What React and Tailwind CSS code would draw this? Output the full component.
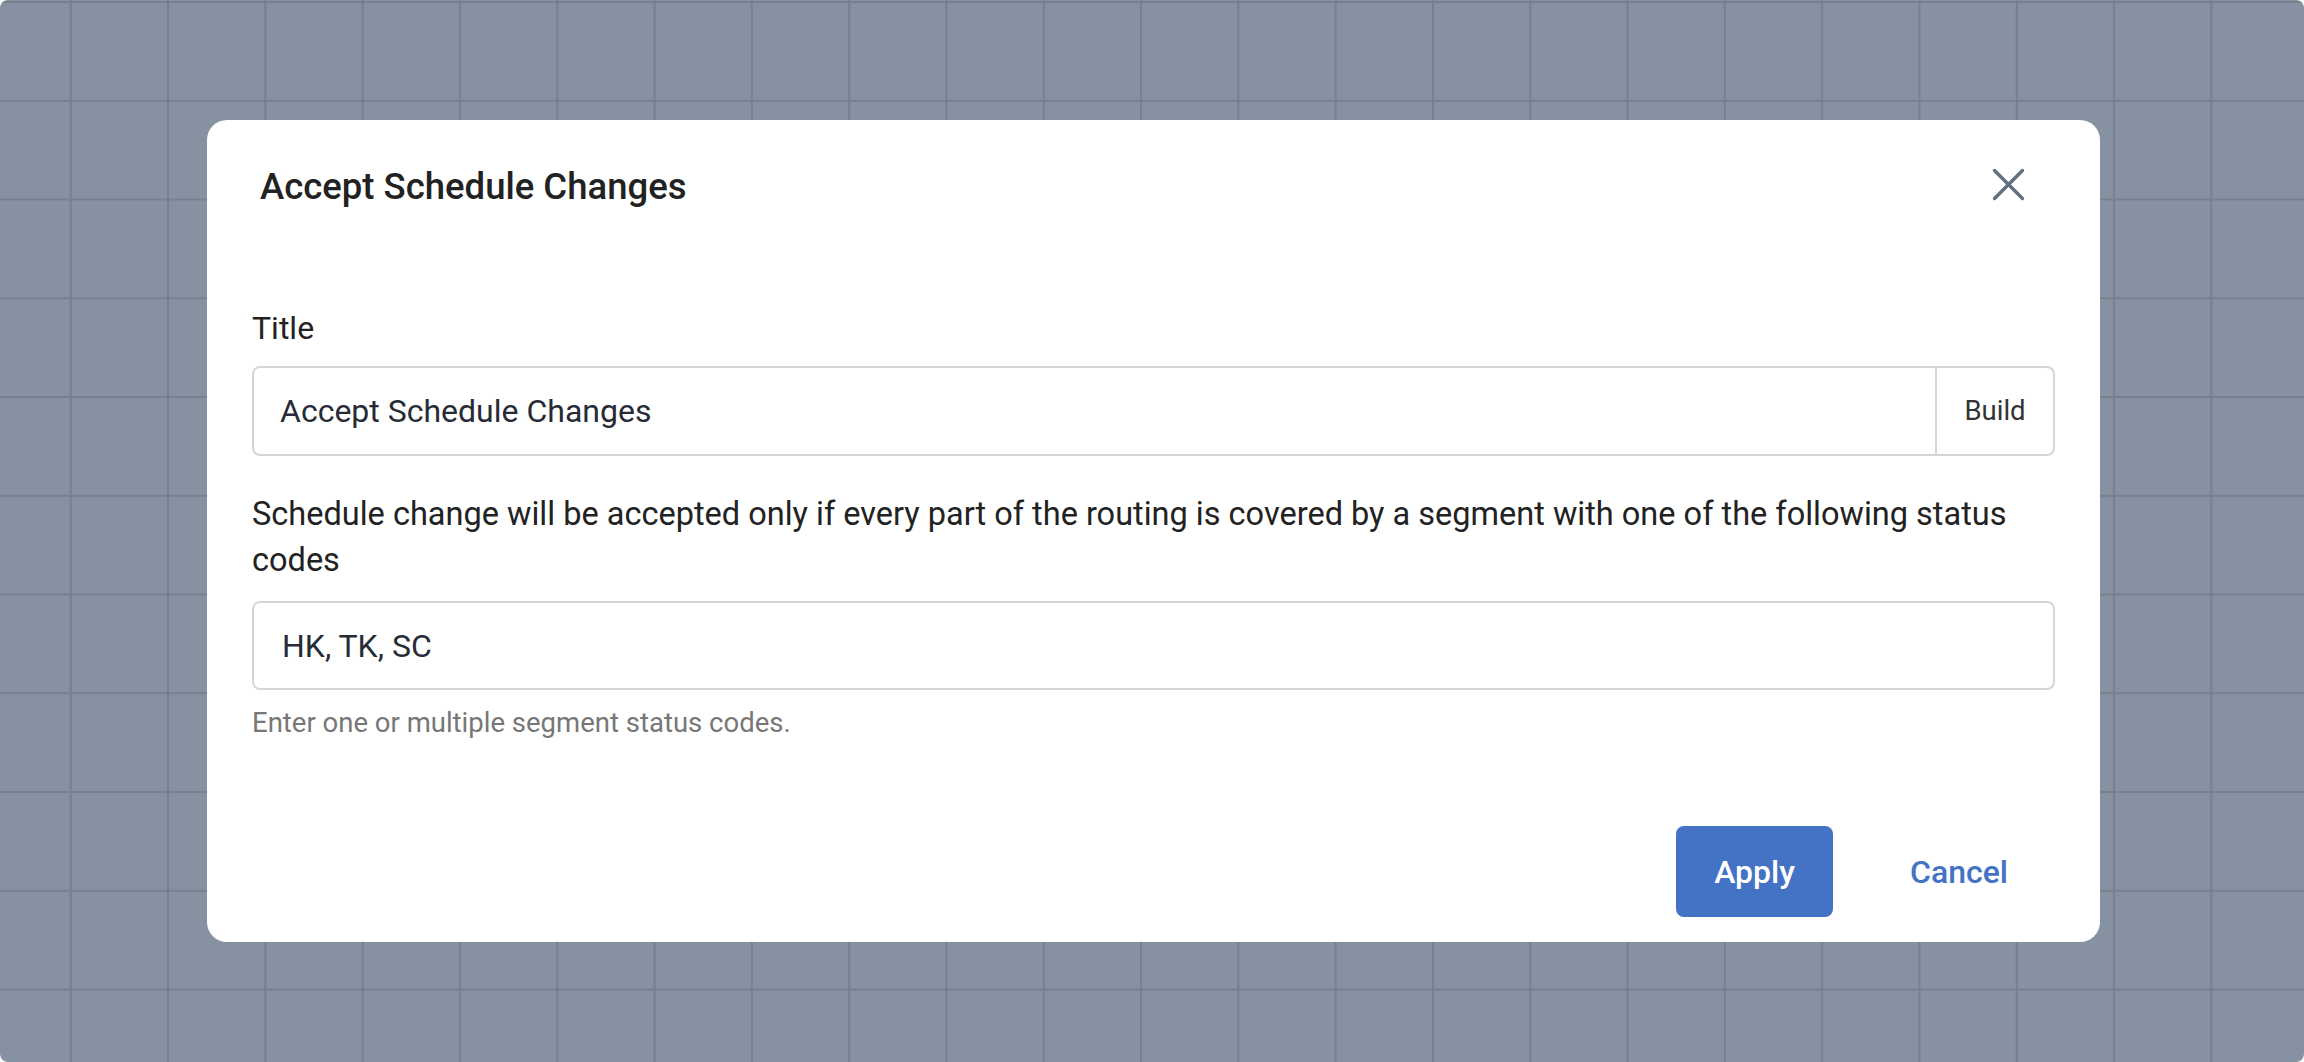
import React from 'react';

// 关闭图标
const CloseIcon = () => (
  <svg width="33" height="33" viewBox="0 0 33 33" fill="none" className="shrink-0 mt-[3px]">
    <path d="M2.5 2.5L30.5 30.5M30.5 2.5L2.5 30.5" stroke="#636e80" strokeWidth="3.4" strokeLinecap="round" />
  </svg>
);

const AcceptScheduleChangesDialog = () => {
  return (
    <div className="w-[2304px] h-[1062px] bg-white font-['Roboto',sans-serif]">
      <div className="h-full rounded-[8px] bg-[#8691a2] bg-[linear-gradient(to_right,#76808f_2px,transparent_2px),linear-gradient(to_bottom,#76808f_2px,transparent_2px)] bg-[size:97.3px_98.75px] bg-[position:-27.5px_1px] pt-[120px] pl-[207px]">
        <div className="w-[1893px] bg-white rounded-[20px] pt-[45px] pb-[25px]">
          {/* 头部 */}
          <div className="flex justify-between items-start pl-[53px] pr-[75px]">
            <h2 className="text-[36.5px] leading-[44px] font-medium text-[#222222]">Accept Schedule Changes</h2>
            <CloseIcon />
          </div>

          {/* 表单内容 */}
          <div className="px-[45px]">
            <div className="mt-[99px] text-[32px] leading-[40px] text-[#222222]">Title</div>
            <div className="mt-[18px] h-[90px] flex border-2 border-[#d6d6da] rounded-[8px]">
              <div className="flex-1 flex items-center pl-[26px] text-[32px] text-[#262b36]">
                Accept Schedule Changes
              </div>
              <div className="w-[118px] flex items-center justify-center border-l-2 border-[#d6d6da] text-[27.5px] text-[#333333]">
                Build
              </div>
            </div>

            <p className="mt-[35px] text-[32.5px] leading-[46px] text-[#222222]">
              Schedule change will be accepted only if every part of the routing is covered by a segment with one of the following status codes
            </p>
            <div className="mt-[18px] h-[89px] flex items-center border-2 border-[#d6d6da] rounded-[8px] pl-[28px] text-[32px] text-[#262b36]">
              HK, TK, SC
            </div>
            <div className="mt-[17px] text-[27.5px] leading-[32px] text-[#777777]">
              Enter one or multiple segment status codes.
            </div>
          </div>

          {/* 底部按钮 */}
          <div className="mt-[87px] flex justify-end items-center gap-[38px] pr-[53px]">
            <button className="w-[157px] h-[91px] rounded-[8px] bg-[#4472c4] text-white text-[32px] font-medium">
              Apply
            </button>
            <button className="h-[91px] px-[39px] text-[#4472c4] text-[32px] font-medium">
              Cancel
            </button>
          </div>
        </div>
      </div>
    </div>
  );
};

export default AcceptScheduleChangesDialog;
